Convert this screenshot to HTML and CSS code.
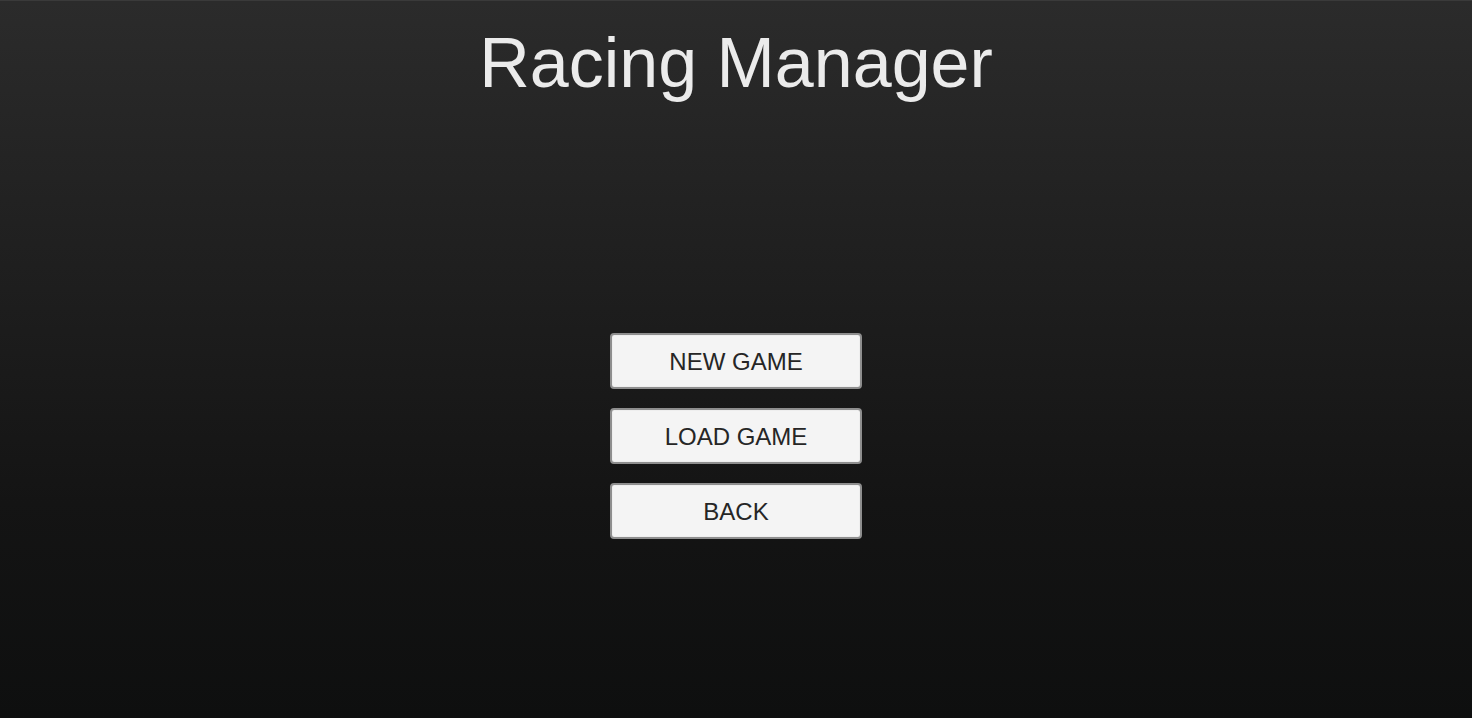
FILE: index.html
```html
<!DOCTYPE html>
<html lang="en">
<head>
<meta charset="utf-8">
<title>Racing Manager</title>
<link rel="stylesheet" href="styles.css">
</head>
<body>
<main class="screen">
  <h1 class="title">Racing Manager</h1>
  <nav class="menu">
    <button class="menu-btn" type="button">NEW GAME</button>
    <button class="menu-btn" type="button">LOAD GAME</button>
    <button class="menu-btn" type="button">BACK</button>
  </nav>
</main>
</body>
</html>
```
FILE: styles.css
```css
html, body {
  margin: 0;
  padding: 0;
  height: 100%;
}
body {
  font-family: "Liberation Sans", Arial, sans-serif;
  background: #0e0f0f;
  overflow: hidden;
}
.screen {
  height: 718px;
  display: flex;
  flex-direction: column;
  align-items: center;
  background: linear-gradient(to bottom, #2b2b2b 0%, #1e1e1e 40%, #141414 70%, #0e0f0f 100%);
  border-top: 1px solid #3a3a3a;
  box-sizing: border-box;
}
.title {
  margin: 27px 0 0 0;
  font-size: 70px;
  line-height: 70px;
  font-weight: normal;
  color: #ebebeb;
  letter-spacing: 0;
}
.menu {
  margin-top: 235px;
  display: flex;
  flex-direction: column;
  gap: 19px;
}
.menu-btn {
  width: 252px;
  height: 56px;
  box-sizing: border-box;
  background: #f4f4f4;
  border: 2px solid #8e8e8e;
  border-radius: 4px;
  font-family: "Liberation Sans", Arial, sans-serif;
  font-size: 24px;
  line-height: 24px;
  color: #262626;
  padding: 2px 0 0 0;
  box-shadow: inset 0 0 1px #bbb;
}
```
